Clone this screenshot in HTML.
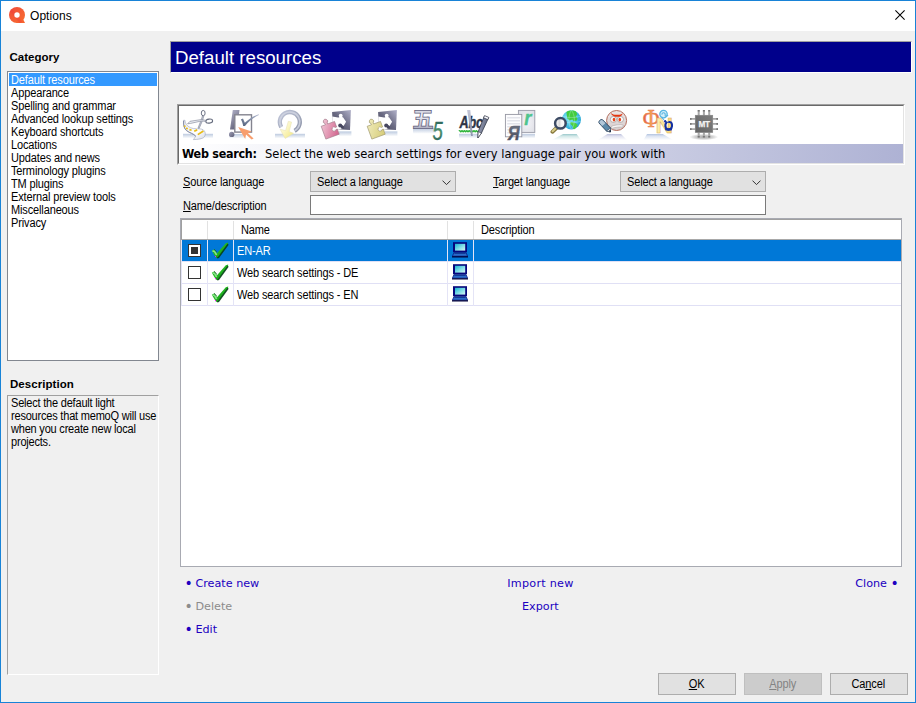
<!DOCTYPE html>
<html lang="en">
<head>
<meta charset="utf-8">
<title>Options</title>
<style>
html,body{margin:0;padding:0;}
body{width:916px;height:703px;overflow:hidden;background:#f0f0f0;font-family:"Liberation Sans",sans-serif;font-size:11px;color:#000;position:relative;letter-spacing:-0.15px;}
*{box-sizing:border-box;}
.abs{position:absolute;}
#win{position:absolute;left:0;top:0;width:916px;height:703px;border:1px solid #1883d7;background:#f0f0f0;}
#titlebar{position:absolute;left:0;top:0;width:914px;height:30px;background:#fff;}
#title{position:absolute;left:30px;top:9px;font-size:12px;line-height:14px;white-space:nowrap;letter-spacing:0.05px;}
.t{position:absolute;white-space:nowrap;line-height:13px;}
.b{font-weight:bold;}
.t.n{font-size:12px;transform:scaleX(.917);transform-origin:0 0;}
.sx{display:inline-block;font-size:12px;transform:scaleX(.917);transform-origin:0 50%;}
.btn .sx{transform-origin:50% 50%;}
u{text-decoration:underline;}
#catlist{position:absolute;left:7px;top:71px;width:152px;height:290px;background:#fff;border:1px solid #828790;}
#catlist div{position:absolute;left:1px;height:13px;line-height:15px;padding-left:2px;white-space:nowrap;}
#catlist div.sel{background:#3399ff;color:#fff;width:148px;}
#descbox{position:absolute;left:7px;top:395px;width:152px;height:280px;background:#f0f0f0;border:1px solid #a0a0a0;border-right-color:#fff;border-bottom-color:#fff;}
#hdr{position:absolute;left:170px;top:41px;width:742px;height:32px;border:1px solid;border-color:#a0a0a0 #fff #fff #a0a0a0;background:#00008b;color:#fff;font-size:18.67px;line-height:32px;padding-left:4px;white-space:nowrap;letter-spacing:0;}
#panel{position:absolute;left:177px;top:104px;width:728px;height:61px;background:#fff;border:1px solid;border-color:#a0a0a0 #fff #fff #a0a0a0;}
#panel:before{content:"";position:absolute;left:0;top:0;right:0;bottom:0;border:1px solid;border-color:#696969 #e3e3e3 #e3e3e3 #696969;}
#grad{position:absolute;left:1px;top:39px;width:724px;height:19px;background:linear-gradient(to right,#ffffff 0%,#aeb2d4 100%);}
.ws{font-family:"DejaVu Sans Condensed","DejaVu Sans",sans-serif;font-size:12.8px;letter-spacing:0;}
.ws.b{font-size:12.4px;letter-spacing:-0.25px;}
.combo{position:absolute;height:21px;background:#e1e1e1;border:1px solid #adadad;line-height:21px;padding-left:6px;white-space:nowrap;}
.combo svg{position:absolute;right:4px;top:8px;}
#nameinp{position:absolute;left:310px;top:195px;width:456px;height:20px;background:#fff;border:1px solid #7a7a7a;}
#grid{position:absolute;left:180px;top:218px;width:722px;height:349px;background:#fff;border:1px solid #a8aab2;}
#gin{position:absolute;left:1px;top:1px;}
.row{position:absolute;left:0;width:719px;height:22px;border-bottom:1px solid #e0e0f5;}
.row.sel{background:#0078d7;color:#fff;}
.vl{position:absolute;top:0;width:1px;background:#e4e4f6;}
.cb i{position:absolute;left:2px;top:2px;width:7px;height:7px;background:#333;}
.cb{position:absolute;left:6px;top:4px;width:13px;height:13px;background:#fff;border:1px solid #333;}
.link{font-family:"DejaVu Sans",sans-serif;font-size:11.2px;letter-spacing:0;color:#2000c0;position:absolute;white-space:nowrap;line-height:13px;}
.bl{font-size:14px;line-height:0;position:relative;top:1px;margin-right:-0.8px;}
.link.dis{color:#8c8c8c;}
.btn{position:absolute;top:673px;width:78px;height:22px;background:#e1e1e1;border:1px solid #adadad;text-align:center;line-height:20px;font-size:11px;padding-right:1px;}
.btn.dis{background:#cccccc;border-color:#bfbfbf;color:#838383;}
</style>
</head>
<body>
<div id="win">
<div id="titlebar"></div>
</div>
<svg class="abs" style="left:9px;top:7px" width="16" height="16" viewBox="0 0 16 16">
<defs><linearGradient id="lg" x1="0" y1="0" x2="1" y2="1"><stop offset="0" stop-color="#f04a3a"/><stop offset="1" stop-color="#f87030"/></linearGradient></defs>
<circle cx="8" cy="8" r="8" fill="url(#lg)"/><path d="M7 16 L16 15.9 L13 10 Z" fill="#f7652f"/><path d="M2 3 L12 15.6" stroke="#f0453c" stroke-width="3" opacity=".55"/><circle cx="8" cy="8" r="2.7" fill="#fff"/>
</svg>
<div id="title">Options</div>
<svg class="abs" style="left:895px;top:10px" width="10" height="10" viewBox="0 0 10 10"><path d="M0.4 0.4 L9.6 9.6 M9.6 0.4 L0.4 9.6" stroke="#000" stroke-width="1.05" fill="none"/></svg>

<div class="t b" style="left:9.5px;top:51px;font-size:11.5px;letter-spacing:0;">Category</div>
<div id="catlist">
<div class="sel" style="top:1px"><span class="sx">Default resources</span></div>
<div style="top:14px"><span class="sx">Appearance</span></div>
<div style="top:27px"><span class="sx">Spelling and grammar</span></div>
<div style="top:40px"><span class="sx">Advanced lookup settings</span></div>
<div style="top:53px"><span class="sx">Keyboard shortcuts</span></div>
<div style="top:66px"><span class="sx">Locations</span></div>
<div style="top:79px"><span class="sx">Updates and news</span></div>
<div style="top:92px"><span class="sx">Terminology plugins</span></div>
<div style="top:105px"><span class="sx">TM plugins</span></div>
<div style="top:118px"><span class="sx">External preview tools</span></div>
<div style="top:131px"><span class="sx">Miscellaneous</span></div>
<div style="top:144px"><span class="sx">Privacy</span></div>
</div>
<div class="t b" style="left:10px;top:378px;font-size:11.5px;letter-spacing:0.05px;">Description</div>
<div id="descbox">
<div class="t n" style="left:3px;top:1px;letter-spacing:-0.22px;">Select the default light<br>resources that memoQ will use<br>when you create new local<br>projects.</div>
</div>

<div id="hdr">Default resources</div>

<div id="panel">
<div id="grad"></div>
<div class="t ws b" style="left:4px;top:42px;">Web search:</div>
<div class="t ws" style="left:87px;top:42px;">Select the web search settings for every language pair you work with</div>
</div>

<!-- ICONS -->
<svg class="abs" style="left:0;top:0" width="0" height="0">
<defs>
<linearGradient id="shad" x1="0" y1="0" x2="0" y2="1"><stop offset="0" stop-color="#bccadf"/><stop offset="1" stop-color="#ffffff"/></linearGradient>
<linearGradient id="dk" x1="0" y1="1" x2="1" y2="0"><stop offset="0" stop-color="#45455a"/><stop offset=".5" stop-color="#6a6a82"/><stop offset="1" stop-color="#b2b2ca"/></linearGradient>
<linearGradient id="pink" x1="0" y1="0" x2="1" y2="1"><stop offset="0" stop-color="#f4d2de"/><stop offset="1" stop-color="#d2628c"/></linearGradient>
<linearGradient id="yel" x1="0" y1="0" x2="1" y2="1"><stop offset="0" stop-color="#f2eec2"/><stop offset="1" stop-color="#d6cc78"/></linearGradient>
<linearGradient id="ring" x1="0" y1="0" x2="1" y2="1"><stop offset="0" stop-color="#bfc5d8"/><stop offset="1" stop-color="#8d94a8"/></linearGradient>
<linearGradient id="metal" x1="0" y1="0" x2="0" y2="1"><stop offset="0" stop-color="#a4a4b8"/><stop offset=".45" stop-color="#f0f0f6"/><stop offset="1" stop-color="#9c9cb0"/></linearGradient>
<linearGradient id="grn5" x1="0" y1="0" x2="0" y2="1"><stop offset="0" stop-color="#234f55"/><stop offset=".5" stop-color="#4c9a70"/><stop offset="1" stop-color="#1e4a50"/></linearGradient>
<linearGradient id="phi" x1="0" y1="0" x2="1" y2="0"><stop offset="0" stop-color="#e2584a"/><stop offset=".5" stop-color="#f4a456"/><stop offset="1" stop-color="#e06048"/></linearGradient>
<linearGradient id="chip" x1="0" y1="1" x2="1" y2="0"><stop offset="0" stop-color="#646464"/><stop offset="1" stop-color="#7e7e7e"/></linearGradient>
<radialGradient id="globe" cx=".4" cy=".4" r=".65"><stop offset="0" stop-color="#92e8f6"/><stop offset=".6" stop-color="#4cc8e6"/><stop offset="1" stop-color="#229fd6"/></radialGradient>
<linearGradient id="lens" x1="0" y1="0" x2="1" y2="0"><stop offset="0" stop-color="#ffffff"/><stop offset=".45" stop-color="#d6d6d8"/><stop offset=".55" stop-color="#f4f4f4"/><stop offset="1" stop-color="#ffffff"/></linearGradient>
<linearGradient id="face" x1="0" y1="0" x2="0" y2="1"><stop offset="0" stop-color="#ece6e6"/><stop offset="1" stop-color="#d6cccc"/></linearGradient>
<linearGradient id="nyel" x1="0" y1="0" x2="1" y2="0"><stop offset="0" stop-color="#fef2b4"/><stop offset="1" stop-color="#f9d970"/></linearGradient>
<radialGradient id="pg" cx=".5" cy=".55" r=".7"><stop offset="0" stop-color="#f4f4f8"/><stop offset="1" stop-color="#dcdde4"/></radialGradient>
<linearGradient id="ya" x1="0" y1="0" x2="0" y2="1"><stop offset="0" stop-color="#747c8c"/><stop offset="1" stop-color="#3e4050"/></linearGradient>
<radialGradient id="chsh" cx=".5" cy=".5" r=".5"><stop offset="0" stop-color="#a8a8a8"/><stop offset=".6" stop-color="#cfcfcf"/><stop offset="1" stop-color="#ffffff"/></radialGradient>
<linearGradient id="sh9" x1="0" y1="0" x2="0" y2="1"><stop offset="0" stop-color="#9ccacc"/><stop offset=".35" stop-color="#d2e8e8"/><stop offset="1" stop-color="#ffffff"/></linearGradient>
<linearGradient id="sh10" x1="0" y1="0" x2="0" y2="1"><stop offset="0" stop-color="#bcc0dc"/><stop offset=".35" stop-color="#e0e2f0"/><stop offset="1" stop-color="#ffffff"/></linearGradient>
<linearGradient id="sh11" x1="0" y1="0" x2="0" y2="1"><stop offset="0" stop-color="#b4c4e0"/><stop offset=".35" stop-color="#dce4f2"/><stop offset="1" stop-color="#ffffff"/></linearGradient>
<linearGradient id="arw" x1="0" y1="0" x2="1" y2="1"><stop offset="0" stop-color="#fffdf0"/><stop offset=".45" stop-color="#fbf6c4"/><stop offset="1" stop-color="#f1e67c"/></linearGradient>
<linearGradient id="rib" x1="0" y1="0" x2="1" y2="1"><stop offset="0" stop-color="#e4e7f0"/><stop offset=".6" stop-color="#ffffff"/><stop offset="1" stop-color="#d6dae6"/></linearGradient>
<linearGradient id="ibar" x1="0" y1="0" x2="0" y2="1"><stop offset="0" stop-color="#c0c2d4"/><stop offset="1" stop-color="#868ea6"/></linearGradient>
<linearGradient id="pen" x1="0" y1="0" x2="1" y2=".4"><stop offset="0" stop-color="#a8aec4"/><stop offset="1" stop-color="#586078"/></linearGradient>
<linearGradient id="bar" x1="0" y1="0" x2=".5" y2="1"><stop offset="0" stop-color="#b4b4ca"/><stop offset="1" stop-color="#64647c"/></linearGradient>
<linearGradient id="ball" x1="0" y1="0" x2="1" y2="1"><stop offset="0" stop-color="#a0a0b8"/><stop offset="1" stop-color="#5c5c74"/></linearGradient>
<linearGradient id="chk2" x1="0" y1="1" x2="1" y2="0"><stop offset="0" stop-color="#55657e"/><stop offset=".5" stop-color="#7b88a2"/><stop offset="1" stop-color="#b4bad0"/></linearGradient>
</defs>
</svg>

<!-- 1 scissors + ribbon -->
<svg class="abs" style="left:182px;top:109px" width="32" height="32" viewBox="0 0 32 32">
<rect x="1" y="24.8" width="30" height="4.6" fill="url(#shad)"/>
<path d="M1.5 11.3 C1.2 16 2 19.6 4.4 21.6 C7.4 24 11.6 24.6 13.8 27.2 L11.4 30.6 C15.6 30.4 20.6 30 22.2 28 C23.8 26 23.8 23 21.2 20.8 C19.6 19.8 17 19.8 14.4 19.8 C10 19.8 6.4 18.4 4.4 15.4 C3.4 14 3 12.6 3 11.3 Z" fill="url(#rib)" stroke="#9aa2b8" stroke-width=".6"/>
<path d="M1.6 12 C1.4 16.4 2.2 19.6 4.6 21.6 C7.6 24 11.6 24.6 13.8 27.2" fill="none" stroke="#7e86a0" stroke-width=".9"/>
<path d="M2.3 16.6 L3.3 17.8 M4.2 19 L5.6 20 M7.4 20.6 L9.6 21.2 M12.2 22.2 L15.2 20.9 M15.8 25.6 L21.4 22" stroke="#e8bc18" stroke-width="1.7" fill="none"/>
<ellipse cx="21.2" cy="4.1" rx="1.9" ry="2.7" fill="none" stroke="#6e7486" stroke-width="1"/>
<ellipse cx="27.2" cy="12.1" rx="3.4" ry="2" fill="none" stroke="#666c7e" stroke-width="1.1" transform="rotate(-6 27.2 12.1)"/>
<path d="M20.4 7 L21.8 7.2 L20.6 11.4 L17.2 19.4 L16 19 L19.2 10.8 Z" fill="#c2c6d2" stroke="#70768a" stroke-width=".5"/>
<path d="M23.8 11.4 L19.6 10.5 L8 12.3 L5.6 14.8 L8.6 14.4 L19.8 11.9 L23.6 12.6 Z" fill="#eceef3" stroke="#70768a" stroke-width=".55"/>
</svg>

<!-- 2 checkbox + cursor -->
<svg class="abs" style="left:228px;top:109px" width="32" height="32" viewBox="0 0 32 32">
<rect x="1.4" y="25" width="16" height="4.6" fill="url(#shad)"/>
<path d="M4.8 1 L11.5 1 L9 20.5 L2 20.5 Z" fill="url(#bar)"/>
<circle cx="3.7" cy="25.4" r="2.7" fill="url(#ball)"/>
<rect x="6.8" y="5.8" width="16.7" height="17.3" fill="#fff" stroke="#84848f" stroke-width="1.4"/>
<path d="M12.8 10.4 L15 9.6 L16.8 13.8 C20.4 10.2 25 7.2 30.6 5.2 L30.9 6 C25.4 8.6 20.6 12.6 17 16.9 L15.2 16.9 C14.8 14.4 14 12 12.8 10.4 Z" fill="url(#chk2)"/>
<path d="M10.2 18.1 L23.7 22.4 L20 24.2 L25.6 29.4 L23.6 30.4 L18 25.6 L17.2 30 Z" fill="#f89e6e"/>
</svg>

<!-- 3 ring + arrow -->
<svg class="abs" style="left:274px;top:109px" width="32" height="32" viewBox="0 0 32 32">
<rect x="1" y="24.8" width="30" height="4.6" fill="url(#shad)"/>
<path d="M7.26 18.2 A10 10 0 1 1 20.6 21.8" fill="none" stroke="url(#ring)" stroke-width="4.3"/>
<path d="M7.26 18.2 A10 10 0 1 1 20.6 21.8" fill="none" stroke="#d3d7e4" stroke-width="1.6" opacity=".8"/>
<path d="M14.3 12.3 L17.6 13.1 L15.2 22.6 L19.6 24.3 L11.2 29.5 L6.1 20.2 L11.6 21.6 Z" fill="url(#arw)" stroke="#e4dfb4" stroke-width=".5"/>
</svg>

<!-- 4 puzzle pink -->
<svg class="abs" style="left:320px;top:109px" width="32" height="32" viewBox="0 0 32 32">
<rect x="19" y="22.4" width="12.4" height="5" fill="url(#shad)"/>
<path d="M12.1 3 L30.9 1.1 L30 20.9 L13 20 Z" fill="url(#dk)"/>
<path d="M12.3 7.4 L18 8.6 L23 8.2 L26.1 12.7 L24 16.2 L22 19.9 L17 20.6 L12.3 20.2 Z" fill="#fff"/>
<circle cx="20.7" cy="6.6" r="1.9" fill="#fff"/>
<path d="M19.4 7.6 L22.2 7.6 L22.6 9.4 L19 9.4 Z" fill="#fff"/>
<circle cx="20.2" cy="16.6" r="2" fill="#47475f"/>
<path d="M21.4 15.4 L24 17.2 L23.4 19.8 L20.8 19.6 Z" fill="#47475f"/>
<g transform="translate(1.2 17.3) rotate(-20)">
<path d="M0 0 H4.5 V-1.3 A2.2 2.2 0 1 1 6.9 -1.3 V0 H14.2 V5.9 H13 A2.1 2.1 0 1 0 13 8.1 H14.2 V13.6 H0 Z" fill="url(#pink)" stroke="#a07888" stroke-width=".6"/>
</g>
</svg>

<!-- 5 puzzle yellow -->
<svg class="abs" style="left:366px;top:109px" width="32" height="32" viewBox="0 0 32 32">
<rect x="19" y="22.4" width="12.4" height="5" fill="url(#shad)"/>
<path d="M12.1 3 L30.9 1.1 L30 20.9 L13 20 Z" fill="url(#dk)"/>
<path d="M12.3 7.4 L18 8.6 L23 8.2 L26.1 12.7 L24 16.2 L22 19.9 L17 20.6 L12.3 20.2 Z" fill="#fff"/>
<circle cx="20.7" cy="6.6" r="1.9" fill="#fff"/>
<path d="M19.4 7.6 L22.2 7.6 L22.6 9.4 L19 9.4 Z" fill="#fff"/>
<circle cx="20.2" cy="16.6" r="2" fill="#47475f"/>
<path d="M21.4 15.4 L24 17.2 L23.4 19.8 L20.8 19.6 Z" fill="#47475f"/>
<g transform="translate(1.2 17.3) rotate(-20)">
<path d="M0 0 H4.5 V-1.3 A2.2 2.2 0 1 1 6.9 -1.3 V0 H14.2 V5.9 H13 A2.1 2.1 0 1 0 13 8.1 H14.2 V13.6 H0 Z" fill="url(#yel)" stroke="#9c9468" stroke-width=".6"/>
</g>
</svg>

<!-- 6 CJK five -->
<svg class="abs" style="left:412px;top:109px" width="32" height="32" viewBox="0 0 32 32">
<rect x="1" y="19.2" width="23" height="5.6" fill="url(#shad)"/>
<text x="0.2" y="17.8" font-family="'Noto Sans CJK SC','WenQuanYi Zen Hei',sans-serif" font-weight="bold" font-size="21.5" fill="url(#metal)" stroke="#62627e" stroke-width=".75">五</text>
<text transform="translate(20.4 30.8) scale(.74 1)" font-family="'Liberation Sans',sans-serif" font-style="italic" font-size="25" fill="url(#grn5)" stroke="#2f6a5c" stroke-width=".35">5</text>
</svg>

<!-- 7 Abc spell -->
<svg class="abs" style="left:458px;top:109px" width="32" height="32" viewBox="0 0 32 32">
<rect x="1" y="24.8" width="20" height="4.6" fill="url(#shad)"/>
<text x="1.6" y="18.6" font-family="'Liberation Sans',sans-serif" font-style="italic" font-weight="bold" font-size="16.8" fill="#2e3546" stroke="#2e3546" stroke-width=".45" textLength="23.4" lengthAdjust="spacingAndGlyphs">Abc</text>
<path d="M1 22.2 q0.6 -1 1.2 0 t1.2 0 q0.6 -1 1.2 0 t1.2 0 q0.6 -1 1.2 0 t1.2 0 q0.6 -1 1.2 0 t1.2 0 q0.6 -1 1.2 0 t1.2 0 q0.6 -1 1.2 0 t1.2 0 q0.6 -1 1.2 0 t1.2 0 q0.6 -1 1.2 0 t1.2 0" fill="none" stroke="#2eb43a" stroke-width="1.5"/>
<path d="M9.1 1 L12.3 1 L14.8 27 L13.1 27 Z" fill="url(#ibar)" opacity=".92"/>
<path d="M26.4 7 L30.6 8.8 L23.4 24.2 L19.9 28.9 L20.2 22.6 Z" fill="url(#pen)" stroke="#262c3c" stroke-width=".7"/>
<path d="M26.6 6.6 L30.8 8.4 L29.8 10.6 L25.6 8.8 Z" fill="#f6f6fa" stroke="#262c3c" stroke-width=".6"/>
<path d="M20.2 22.6 L23.4 24.2 L19.9 28.9 Z" fill="#fff" stroke="#262c3c" stroke-width=".6"/>
</svg>

<!-- 8 pages -->
<svg class="abs" style="left:504px;top:109px" width="32" height="32" viewBox="0 0 32 32">
<rect x="17" y="24.8" width="14" height="4.6" fill="url(#shad)"/>
<rect x="14.4" y="1.4" width="16.4" height="22" fill="url(#pg)" stroke="#9a9ca8" stroke-width=".9"/>
<text transform="translate(20.2 16.2) scale(.88 1)" font-family="'Liberation Sans',sans-serif" font-style="italic" font-weight="bold" font-size="21" fill="#4fc48e" stroke="#4fc48e" stroke-width=".4">r</text>
<rect x="1.4" y="5.4" width="16.4" height="22.4" fill="#fcfcfe" stroke="#9496a2" stroke-width=".9"/>
<path d="M3.2 8.7 H16 M3.2 11.7 H16 M3.2 14.7 H16 M3.2 17.7 H16 M3.2 20.7 H16 M3.2 23.7 H16" stroke="#e2e3ea" stroke-width="1.6"/>
<text transform="translate(3.8 30.8) scale(.8 1)" font-family="'Liberation Sans',sans-serif" font-style="italic" font-weight="bold" font-size="20.4" fill="url(#ya)" stroke="#5c6272" stroke-width=".5">Я</text>
</svg>

<!-- 9 globe + magnifier -->
<svg class="abs" style="left:550px;top:109px" width="32" height="32" viewBox="0 0 32 32">
<path d="M13.1 25.1 L26.6 25.1 L31 31 L2 31 Z" fill="url(#sh9)"/>
<circle cx="21.4" cy="10.8" r="9.6" fill="url(#globe)"/>
<path d="M16.4 3 C19 1.4 23.6 1 26 2.6 L27.4 5.4 L25.6 7.4 L27.6 9 L27 11.6 L23.6 12.2 L22.4 10.6 L19.6 11.4 L17.4 9.4 L16.8 6.4 Z" fill="#44cc3e"/>
<path d="M20.6 13 L24.6 13.4 L27.6 15.4 L27 17.6 L24.6 20.2 L23 19.8 L22.6 17 L20.4 15 Z" fill="#4cd040"/>
<path d="M28.4 5.6 L30.4 8.4 L30.6 12 L29 13.4 L27.6 10.6 Z" fill="#38b4d8"/>
<path d="M12.6 7 C16 9 27 9 30.4 7 M11.9 12 C17 14.4 26 14.2 31 12 M21.4 1.2 C18 6 18 16 21.4 20.4 M21.4 1.2 C25.4 6 25.4 16 21.4 20.4" fill="none" stroke="#d8f6fa" stroke-width=".45" opacity=".7"/>
<path d="M6.4 19 L2.4 22.8" stroke="#85763a" stroke-width="3.8" stroke-linecap="round"/>
<path d="M6.2 18.8 L2.6 22.2" stroke="#d6ca86" stroke-width="2" stroke-linecap="round"/>
<circle cx="10.4" cy="14.3" r="5.3" fill="url(#lens)" stroke="#3c4a64" stroke-width="2.5"/>
</svg>

<!-- 10 angry face + pen -->
<svg class="abs" style="left:596px;top:109px" width="32" height="32" viewBox="0 0 32 32">
<path d="M11.5 25.1 L25 25.1 L31 31 L2 31 Z" fill="url(#sh10)"/>
<circle cx="20.6" cy="11.5" r="10" fill="url(#face)" stroke="#b26c5c" stroke-width="1"/>
<ellipse cx="17.4" cy="10.4" rx="3.1" ry="3" fill="#fbfbfb" stroke="#8e8686" stroke-width=".6"/>
<ellipse cx="24.4" cy="10.4" rx="3.1" ry="3" fill="#fbfbfb" stroke="#8e8686" stroke-width=".6"/>
<ellipse cx="18" cy="10.6" rx="1.3" ry="1.9" fill="#e8441a"/>
<ellipse cx="23.8" cy="10.6" rx="1.3" ry="1.9" fill="#e8441a"/>
<path d="M14.8 4 C16.6 5.6 19 6 21.2 5.8 C23.4 6 25.4 5.6 26.8 4.2 C26.4 6.2 24.6 7.4 22.8 7.8 L19.4 7.8 C17.4 7.4 15.6 6.2 14.8 4 Z" fill="#e4360f"/>
<path d="M15 17.6 C18 15.8 24 15.4 27.2 16 L27 18 C23.6 17.8 18.4 18.2 15.4 19.6 Z" fill="#f8f6f6" stroke="#a09898" stroke-width=".5"/>
<g transform="translate(1.2 1.6)"><path d="M5.4 9.2 L13.4 17.4 L13.2 21.4 L9.2 20.4 L1.8 12.4 C1 10.6 3.6 8.2 5.4 9.2 Z" fill="#5d8aaa" stroke="#27405a" stroke-width=".9"/>
<path d="M5.2 9.6 L8.2 12.6 L5 15.4 L2.2 12.2 C1.6 11 3.8 8.8 5.2 9.6 Z" fill="#b4c8da"/>
<path d="M13.4 17.4 L13.2 21.4 L9.2 20.4 Z" fill="#f0f3f6" stroke="#27405a" stroke-width=".6"/>
<path d="M13.2 21.4 L12 20.2 L13.3 19.9 Z" fill="#1c2c40" stroke="#1c2c40" stroke-width=".8"/></g>
</svg>

<!-- 11 phi N -->
<svg class="abs" style="left:642px;top:109px" width="32" height="32" viewBox="0 0 32 32">
<path d="M5 25.1 L20.7 25.1 L31 31 L1.5 31 Z" fill="url(#sh11)"/>
<text transform="translate(0.8 17.8) scale(.9 1)" font-family="'Liberation Serif',serif" font-size="25.4" fill="url(#phi)" stroke="#e87a4e" stroke-width=".5">Φ</text>
<text transform="translate(13.4 23.8) scale(1.13 1)" font-family="'Liberation Sans',sans-serif" font-weight="bold" font-size="21.5" fill="url(#nyel)" stroke="#d8a868" stroke-width=".45">N</text>
<circle cx="21.5" cy="5.1" r="3.7" fill="#d4eef9" stroke="#58b6e0" stroke-width="1.3"/>
<path d="M19.8 5.6 C20 3.2 23.6 3.2 23.2 5.8 C22.8 7.4 24.8 8 26 6 M19.6 8.2 L22 11" fill="none" stroke="#58b6e0" stroke-width="1.1"/>
<path d="M23.2 12 C22.6 12.6 24 13 24.6 13.4 C22.6 15.6 23 19.4 25.6 20.4 C28.4 21.2 30.4 18.8 30 15.8 C29.8 13.8 28.6 12.8 27.2 13" fill="none" stroke="#1330a2" stroke-width="2.1" stroke-linecap="round"/>
<path d="M22.6 19.6 L30.4 19 L29.6 21.4 L23.6 21.6 Z" fill="#1330a2"/>
</svg>

<!-- 12 MT chip -->
<svg class="abs" style="left:688px;top:109px" width="32" height="32" viewBox="0 0 32 32">
<ellipse cx="15.8" cy="28" rx="14.4" ry="3.2" fill="url(#chsh)"/>
<path d="M10.7 1.2 V6.4 M15.9 1.2 V6.4 M21.2 1.2 V6.4 M10.7 23.4 V28.4 M15.9 23.4 V28.4 M21.2 23.4 V28.4" stroke="#a8a8a8" stroke-width="2"/>
<path d="M10.7 1 V2.6 M15.9 1 V2.6 M21.2 1 V2.6 M10.7 27 V28.6 M15.9 27 V28.6 M21.2 27 V28.6" stroke="#787878" stroke-width="2"/>
<path d="M2 9.8 H7.4 M2 14.9 H7.4 M2 20.2 H7.4 M24.6 9.8 H30 M24.6 14.9 H30 M24.6 20.2 H30" stroke="#a8a8a8" stroke-width="1.8"/>
<path d="M2 9.8 H3.6 M2 14.9 H3.6 M2 20.2 H3.6 M28.4 9.8 H30 M28.4 14.9 H30 M28.4 20.2 H30" stroke="#787878" stroke-width="1.8"/>
<rect x="7.2" y="6.2" width="17.6" height="17.4" fill="url(#chip)" stroke="#848484" stroke-width=".5"/>
<text x="16.2" y="17.9" text-anchor="middle" font-family="'Liberation Sans',sans-serif" font-weight="bold" font-size="8.2" fill="#f2f2f2" stroke="#f2f2f2" stroke-width=".25">MT</text>
</svg>
<!-- /ICONS -->

<div class="t n" style="left:183px;top:176px;"><u>S</u>ource language</div>
<div class="combo" style="left:310px;top:171px;width:146px;"><span class="sx">Select a language</span><svg width="9" height="6" viewBox="0 0 9 6"><path d="M0.5 0.6 L4.5 4.6 L8.5 0.6" stroke="#333" stroke-width="1" fill="none"/></svg></div>
<div class="t n" style="left:493px;top:176px;"><u>T</u>arget language</div>
<div class="combo" style="left:620px;top:171px;width:146px;"><span class="sx">Select a language</span><svg width="9" height="6" viewBox="0 0 9 6"><path d="M0.5 0.6 L4.5 4.6 L8.5 0.6" stroke="#333" stroke-width="1" fill="none"/></svg></div>
<div class="t n" style="left:183px;top:200px;"><u>N</u>ame/description</div>
<div id="nameinp"></div>

<div id="grid">
<div class="abs" style="left:0;top:0;width:720px;height:1px;background:#a0a0a0;"></div>
<div class="abs" style="left:0;top:0;width:1px;height:21px;background:#a0a0a0;"></div>
<div class="abs" style="left:0;top:21px;width:1px;height:66px;background:#e4e4f6;"></div>
<div id="gin">
<svg class="abs" style="left:0;top:0" width="0" height="0"><defs>
<linearGradient id="ck" x1="0" y1="0" x2="1" y2="1"><stop offset="0" stop-color="#3ed43e"/><stop offset=".55" stop-color="#1fb01f"/><stop offset="1" stop-color="#0a6a0a"/></linearGradient>
<linearGradient id="scr" x1="0" y1="0" x2="1" y2="1"><stop offset="0" stop-color="#18b4d2"/><stop offset=".6" stop-color="#8ee2ea"/><stop offset="1" stop-color="#d6f6f4"/></linearGradient>
</defs></svg>
<div class="t n" style="left:59px;top:4px;">Name</div>
<div class="t n" style="left:299px;top:4px;">Description</div>
<div class="abs" style="left:0;top:19px;width:719px;height:1px;background:#a8a8a8;"></div>
<div class="row sel" style="top:20px;"><div class="cb"><i></i></div><svg class="abs" style="left:29px;top:2px" width="18" height="17" viewBox="0 0 18 17"><path d="M0.8 8.8 L3.4 7.2 L6 11.2 L14.8 1.2 L17.2 0.4 L17 2.2 L7.2 15.8 L5 15.8 Z" fill="url(#ck)"/><path d="M6.2 15.7 L7.6 15.4 L17.1 2.2" stroke="#064018" stroke-width="1.5" fill="none" opacity=".9"/><path d="M1.4 9.2 L3.4 9 L5.6 13" stroke="#86e486" stroke-width="1.6" fill="none"/><path d="M3 7.4 L5.8 10" stroke="#0a4a1c" stroke-width="1" fill="none" opacity=".8"/><rect x="4" y="14" width="1" height="1" fill="#f0f"/></svg><div class="t n" style="left:55px;top:5px;">EN-AR</div><svg class="abs" style="left:270px;top:2px" width="16" height="17" viewBox="0 0 16 17"><rect x="1" y="0.2" width="14" height="10" fill="#06067c"/><rect x="3" y="1.8" width="10.2" height="6.8" fill="url(#scr)"/><path d="M1.9 10.6 L14.1 10.6 L15.6 14.2 L0.4 14.2 Z" fill="#2b6dc9" stroke="#0c1c86" stroke-width=".8"/><path d="M2.4 11.4 H13.6" stroke="#0a2a86" stroke-width=".8"/><rect x="0" y="14.2" width="16" height="1.3" fill="#02023c"/></svg></div>
<div class="row" style="top:42px;"><div class="cb"></div><svg class="abs" style="left:29px;top:2px" width="18" height="17" viewBox="0 0 18 17"><path d="M0.8 8.8 L3.4 7.2 L6 11.2 L14.8 1.2 L17.2 0.4 L17 2.2 L7.2 15.8 L5 15.8 Z" fill="url(#ck)"/><path d="M6.2 15.7 L7.6 15.4 L17.1 2.2" stroke="#064018" stroke-width="1.5" fill="none" opacity=".9"/><path d="M1.4 9.2 L3.4 9 L5.6 13" stroke="#86e486" stroke-width="1.6" fill="none"/><path d="M3 7.4 L5.8 10" stroke="#0a4a1c" stroke-width="1" fill="none" opacity=".8"/><rect x="4" y="14" width="1" height="1" fill="#f0f"/></svg><div class="t n" style="left:55px;top:5px;">Web search settings - DE</div><svg class="abs" style="left:270px;top:2px" width="16" height="17" viewBox="0 0 16 17"><rect x="1" y="0.2" width="14" height="10" fill="#06067c"/><rect x="3" y="1.8" width="10.2" height="6.8" fill="url(#scr)"/><path d="M1.9 10.6 L14.1 10.6 L15.6 14.2 L0.4 14.2 Z" fill="#2b6dc9" stroke="#0c1c86" stroke-width=".8"/><path d="M2.4 11.4 H13.6" stroke="#0a2a86" stroke-width=".8"/><rect x="0" y="14.2" width="16" height="1.3" fill="#02023c"/></svg></div>
<div class="row" style="top:64px;"><div class="cb"></div><svg class="abs" style="left:29px;top:2px" width="18" height="17" viewBox="0 0 18 17"><path d="M0.8 8.8 L3.4 7.2 L6 11.2 L14.8 1.2 L17.2 0.4 L17 2.2 L7.2 15.8 L5 15.8 Z" fill="url(#ck)"/><path d="M6.2 15.7 L7.6 15.4 L17.1 2.2" stroke="#064018" stroke-width="1.5" fill="none" opacity=".9"/><path d="M1.4 9.2 L3.4 9 L5.6 13" stroke="#86e486" stroke-width="1.6" fill="none"/><path d="M3 7.4 L5.8 10" stroke="#0a4a1c" stroke-width="1" fill="none" opacity=".8"/><rect x="4" y="14" width="1" height="1" fill="#f0f"/></svg><div class="t n" style="left:55px;top:5px;">Web search settings - EN</div><svg class="abs" style="left:270px;top:2px" width="16" height="17" viewBox="0 0 16 17"><rect x="1" y="0.2" width="14" height="10" fill="#06067c"/><rect x="3" y="1.8" width="10.2" height="6.8" fill="url(#scr)"/><path d="M1.9 10.6 L14.1 10.6 L15.6 14.2 L0.4 14.2 Z" fill="#2b6dc9" stroke="#0c1c86" stroke-width=".8"/><path d="M2.4 11.4 H13.6" stroke="#0a2a86" stroke-width=".8"/><rect x="0" y="14.2" width="16" height="1.3" fill="#02023c"/></svg></div>
<div class="vl" style="left:25px;top:1px;height:18px;background:#e2e2e2;"></div><div class="vl" style="left:25px;top:20px;height:66px;"></div>
<div class="vl" style="left:51px;top:1px;height:18px;background:#e2e2e2;"></div><div class="vl" style="left:51px;top:20px;height:66px;"></div>
<div class="vl" style="left:265px;top:1px;height:18px;background:#e2e2e2;"></div><div class="vl" style="left:265px;top:20px;height:66px;"></div>
<div class="vl" style="left:291px;top:1px;height:18px;background:#e2e2e2;"></div><div class="vl" style="left:291px;top:20px;height:66px;"></div>
</div>
</div>

<div class="link" style="left:184.4px;top:577px;"><span class="bl">•</span> Create new</div>
<div class="link dis" style="left:184.4px;top:600px;"><span class="bl">•</span> Delete</div>
<div class="link" style="left:184.4px;top:623px;"><span class="bl">•</span> Edit</div>
<div class="link" style="left:507.3px;top:577px;letter-spacing:.25px;">Import new</div>
<div class="link" style="left:522px;top:600px;">Export</div>
<div class="link" style="right:18px;top:577px;">Clone <span class="bl">•</span></div>

<div class="btn" style="left:658px;"><span class="sx"><u>O</u>K</span></div>
<div class="btn dis" style="left:744px;"><span class="sx"><u>A</u>pply</span></div>
<div class="btn" style="left:830px;"><span class="sx">Ca<u>n</u>cel</span></div>
</body>
</html>
